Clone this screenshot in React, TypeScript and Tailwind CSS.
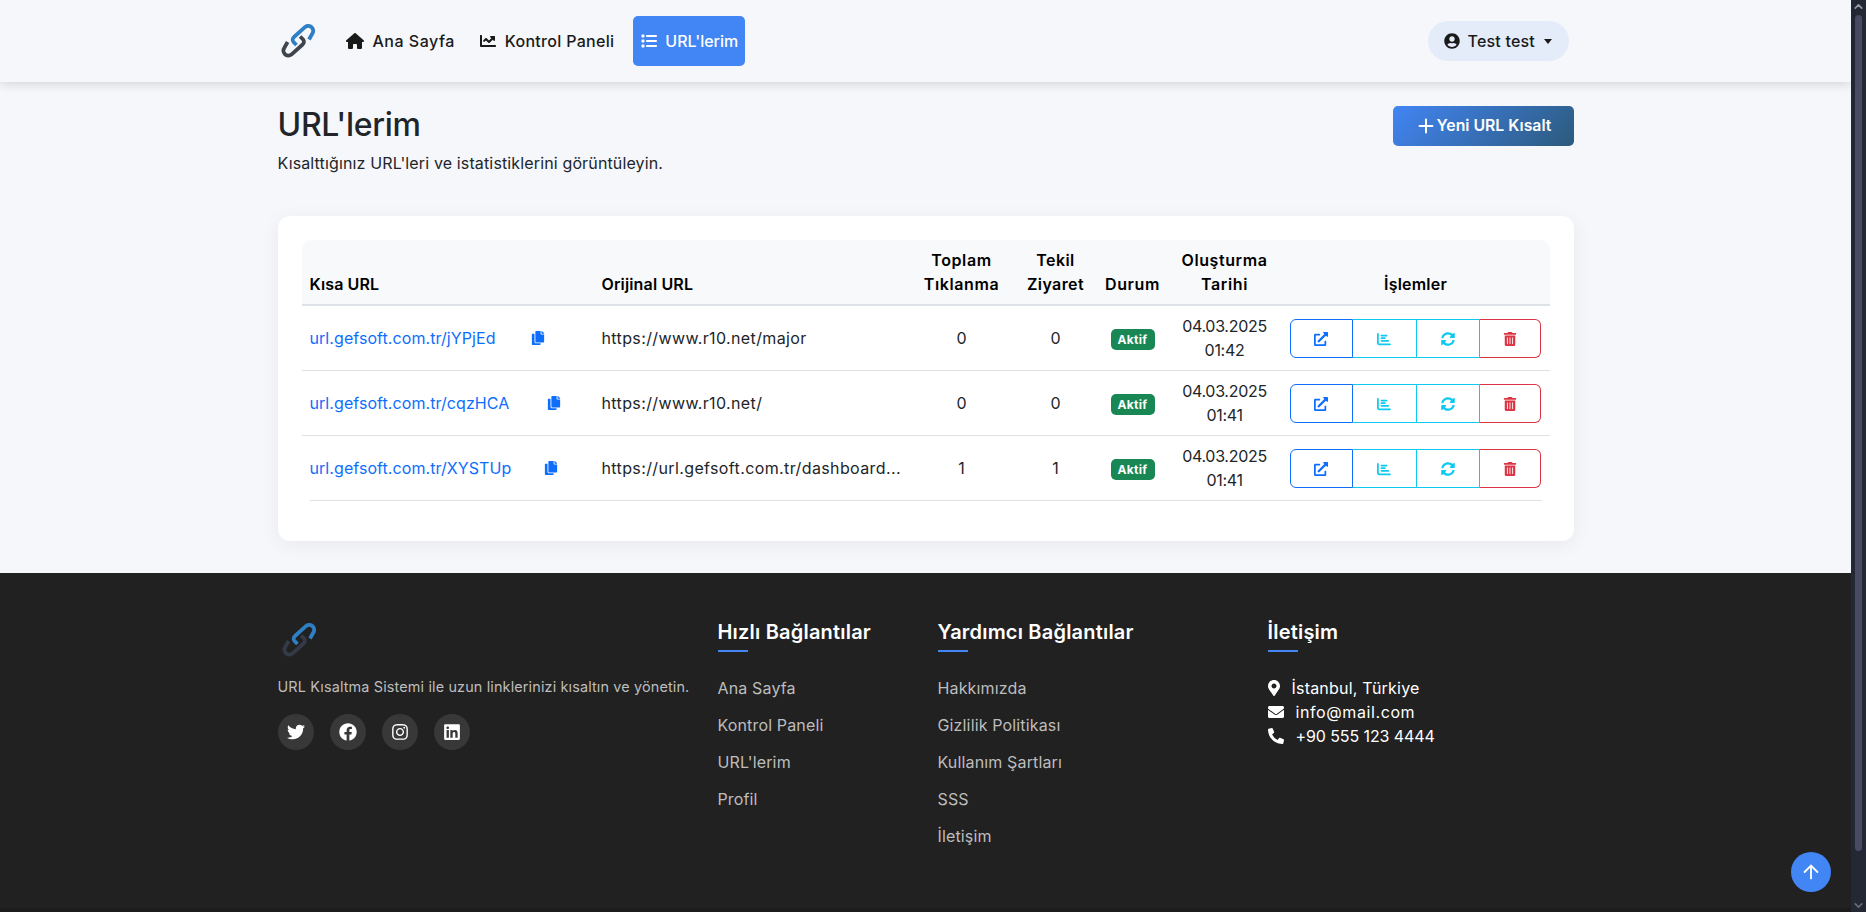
import React from "react";
import { FaChartLine, FaUserCircle, FaCopy, FaExternalLinkAlt, FaSyncAlt, FaTrashAlt, FaTwitter, FaFacebook, FaInstagram, FaLinkedin, FaMapMarkerAlt, FaEnvelope, FaPhoneAlt } from "react-icons/fa";
import { FaHouse, FaList, FaChartBar } from "react-icons/fa6";
import { Plus, ArrowUp, ChevronUp, ChevronDown } from "lucide-react";

function Logo({ dark }: { dark?: boolean }) {
  return (
    <svg width="45" height="45" viewBox="0 0 45 45" fill="none" className="block">
      <path d="M12.6 22 L9.4 27.6 A5 5 0 0 0 16.4 34.6 L27.6 24.5 A3.5 3.5 0 0 0 28.1 19.5 L25.1 16.5" stroke={dark ? "#343a46" : "#40444c"} strokeWidth="3.8" />
      <path d="M34 19.5 L37.2 13.9 A5 5 0 0 0 30.2 6.9 L19 17 A3.5 3.5 0 0 0 18.5 22 L21.5 25" stroke="#2f7fc4" strokeWidth="3.8" />
    </svg>
  );
}

const rows = [
  { short: "url.gefsoft.com.tr/jYPjEd", w: "w-[235px]", orig: "https://www.r10.net/major", t: "0", u: "0", time: "01:42" },
  { short: "url.gefsoft.com.tr/cqzHCA", w: "w-[251px]", orig: "https://www.r10.net/", t: "0", u: "0", time: "01:41" },
  { short: "url.gefsoft.com.tr/XYSTUp", w: "w-[248px]", orig: "https://url.gefsoft.com.tr/dashboard...", t: "1", u: "1", time: "01:41" },
];

function FooterCol({ title, items, className }: { title: string; items: string[]; className: string }) {
  return (
    <div className={className}>
      <FootTitle>{title}</FootTitle>
      <ul className="flex flex-col gap-[13px] mt-[24px]">
        {items.map((i) => (
          <li key={i} className="leading-[24px] text-[#bdbdbd] text-[16px] tracking-[0.15px]">{i}</li>
        ))}
      </ul>
    </div>
  );
}

function FootTitle({ children }: { children: React.ReactNode }) {
  return (
    <div>
      <h5 className="text-white font-semibold text-[20px] leading-[23px] pt-[1px] tracking-[0.2px]">{children}</h5>
      <div className="w-[30px] h-[2px] bg-[#4285f4] mt-[6px]" />
    </div>
  );
}

export default function App() {
  return (
    <div className="flex h-screen overflow-hidden font-['Inter','Liberation_Sans',sans-serif] text-[#212529] relative">
      <div className="flex-1 min-w-0 flex flex-col bg-[#f5f7fb]">
        <nav className="h-[82px] shrink-0 bg-[#f5f7fb] shadow-[0_2px_10px_rgba(0,0,0,0.15)] relative z-10">
          <div className="w-[1320px] mx-auto px-3 h-full flex items-center justify-between">
            <div className="flex items-center">
              <div className="ml-[-3px] mt-[3px]"><Logo /></div>
              <div className="flex items-center ml-[26px] text-[16px] font-medium text-[#1a1a1a]">
                <a className="flex items-center gap-[9px] tracking-[0.5px]"><FaHouse className="text-[16px] w-[18px]" />Ana Sayfa</a>
                <a className="flex items-center gap-[9px] ml-[25px] tracking-[0.3px]"><FaChartLine className="text-[16px]" />Kontrol Paneli</a>
                <a className="flex items-center gap-[8px] ml-[19px] h-[50px] w-[112px] pl-[8px] bg-[#4285f4] text-white rounded-[5px]"><FaList className="text-[16px]" />URL'lerim</a>
              </div>
            </div>
            <div className="mr-[5px] flex items-center h-[40px] w-[141px] pl-[16px] rounded-[20px] bg-[#e5ecf9] text-[16px] font-medium text-[#1a1a1a] gap-[8px] tracking-[0.2px]">
              <FaUserCircle className="text-[16px]" />Test test
              <span className="w-0 h-0 border-x-[4px] border-x-transparent border-t-[5px] border-t-[#1a1a1a] ml-[1px]" />
            </div>
          </div>
        </nav>
        <main className="w-[1320px] mx-auto px-3 flex-1 shrink-0">
          <div className="flex justify-between mt-[24px]">
            <div>
              <h1 className="text-[32px] leading-[38px] font-medium tracking-[-0.3px]">URL'lerim</h1>
              <p className="mt-[7px] text-[16px] leading-[24px] tracking-[0.14px]">Kısalttığınız URL'leri ve istatistiklerini görüntüleyin.</p>
            </div>
            <button className="h-[40px] w-[181px] rounded-[5px] bg-[linear-gradient(135deg,#4285f4,#2c5a7c)] text-white font-semibold text-[15.8px] flex items-center justify-center"><Plus size={22} strokeWidth={2.2} />Yeni URL Kısalt</button>
          </div>
          <div className="mt-[41px] bg-white rounded-[12px] shadow-[0_4px_20px_rgba(0,0,0,0.06)] p-6">
            <table className="table-fixed w-[1248px] border-collapse text-[16px] leading-[24px]">
              <colgroup>
                <col className="w-[292px]" /><col className="w-[316px]" /><col className="w-[104px]" /><col className="w-[84px]" /><col className="w-[70px]" /><col className="w-[114px]" /><col className="w-[268px]" />
              </colgroup>
              <thead>
                <tr className="bg-[#f8f9fa] border-b-2 border-[#dee2e6] text-black align-bottom">
                  <th className="text-left px-2 pt-[8px] pb-2 font-semibold rounded-tl-[10px] tracking-[0.1px]">Kısa URL</th>
                  <th className="text-left px-2 pt-[8px] pb-2 font-semibold tracking-[0.15px]">Orijinal URL</th>
                  <th className="pt-[8px] pb-2 font-semibold tracking-[0.6px]">Toplam<br />Tıklanma</th>
                  <th className="pt-[8px] pb-2 font-semibold tracking-[0.4px]">Tekil<br />Ziyaret</th>
                  <th className="pt-[8px] pb-2 font-semibold tracking-[0.6px]">Durum</th>
                  <th className="pt-[8px] pb-2 font-semibold tracking-[0.6px]">Oluşturma<br />Tarihi</th>
                  <th className="pt-[8px] pb-2 font-semibold rounded-tr-[10px] tracking-[0.2px]">İşlemler</th>
                </tr>
              </thead>
              <tbody>
                {rows.map((r, i) => (
                  <tr key={r.short} className={i < 2 ? "border-b border-[#dee2e6] h-[65px]" : "h-[65px]"}>
                    <td className="px-2">
                      <span className={`inline-flex items-center justify-between tracking-[0.07px] text-[#0d6efd] ${r.w}`}>{r.short}<FaCopy className="text-[14px]" /></span>
                    </td>
                    <td className="px-2 whitespace-nowrap tracking-[0.38px]">{r.orig}</td>
                    <td className="text-center">{r.t}</td>
                    <td className="text-center">{r.u}</td>
                    <td className="text-center"><span className="inline-block h-[21px] w-[44px] mt-[4px] rounded-[5px] bg-[#198754] text-white text-[12px] leading-[21px] font-bold tracking-[0.3px]">Aktif</span></td>
                    <td className="text-center tracking-[-0.3px]">04.03.2025<br />{r.time}</td>
                    <td className="px-2">
                      <div className="flex h-[39px] mt-[2px] w-[251px]">
                        <button className="w-[63px] flex items-center justify-center border border-[#0d6efd] text-[#0d6efd] rounded-l-[6px] text-[14px]"><FaExternalLinkAlt /></button>
                        <button className="w-[64px] flex items-center justify-center border border-l-0 border-[#0dcaf0] text-[#0dcaf0] text-[14px]"><FaChartBar /></button>
                        <button className="w-[63px] flex items-center justify-center border border-l-0 border-[#0dcaf0] text-[#0dcaf0] text-[14px]"><FaSyncAlt /></button>
                        <button className="flex-1 flex items-center justify-center border border-l-0 border-[#dc3545] text-[#dc3545] rounded-r-[6px] text-[14px]"><FaTrashAlt /></button>
                      </div>
                    </td>
                  </tr>
                ))}
              </tbody>
            </table>
            <div className="mx-2 h-px bg-[#dee2e6] mb-[16px]" />
          </div>
        </main>
        <footer className="h-[339px] mt-[32px] shrink-0 bg-[#212121] flex flex-col">
          <div className="w-[1320px] mx-auto px-3 pt-[47px] flex flex-1">
            <div className="w-[440px]">
              <div className="ml-[-2px] mt-[-1px] h-[40px]"><Logo dark /></div>
              <p className="mt-[17px] text-[14.4px] leading-[22px] text-[#bdbdbd] tracking-[0.15px]">URL Kısaltma Sistemi ile uzun linklerinizi kısaltın ve yönetin.</p>
              <div className="flex gap-4 mt-[16px]">
                {[FaTwitter, FaFacebook, FaInstagram, FaLinkedin].map((I, i) => (
                  <span key={i} className="w-[36px] h-[36px] rounded-full bg-[#383838] text-white flex items-center justify-center text-[18px]"><I /></span>
                ))}
              </div>
            </div>
            <FooterCol className="w-[220px]" title="Hızlı Bağlantılar" items={["Ana Sayfa", "Kontrol Paneli", "URL'lerim", "Profil"]} />
            <FooterCol className="w-[330px]" title="Yardımcı Bağlantılar" items={["Hakkımızda", "Gizlilik Politikası", "Kullanım Şartları", "SSS", "İletişim"]} />
            <div>
              <FootTitle>İletişim</FootTitle>
              <div className="mt-[24px] text-white text-[16px] leading-[24px]">
                <div className="flex items-center tracking-[0.2px]"><FaMapMarkerAlt className="text-[16px] w-[12px] mr-[12px]" />İstanbul, Türkiye</div>
                <div className="flex items-center tracking-[0.6px]"><FaEnvelope className="text-[16px] mr-[12px]" />info@mail.com</div>
                <div className="flex items-center tracking-[-0.1px]"><FaPhoneAlt className="text-[16px] mr-[12px]" />+90 555 123 4444</div>
              </div>
            </div>
          </div>
          <div className="h-[4px] shrink-0 bg-[#1c1c1c]" />
        </footer>
      </div>
      <div className="w-[15px] shrink-0 bg-[#242835] flex flex-col items-center justify-between relative">
        <ChevronUp size={13} strokeWidth={3} className="text-[#9a9aa8]" />
        <div className="absolute top-[15px] h-[836px] left-[4px] w-[7px] rounded-full bg-[#4a4a62]" />
        <ChevronDown size={13} strokeWidth={3} className="text-[#6a6a78]" />
      </div>
      <button className="absolute left-[1791px] top-[852px] w-[40px] h-[40px] rounded-full bg-[#4285f4] text-white flex items-center justify-center"><ArrowUp size={22} strokeWidth={2} /></button>
    </div>
  );
}
